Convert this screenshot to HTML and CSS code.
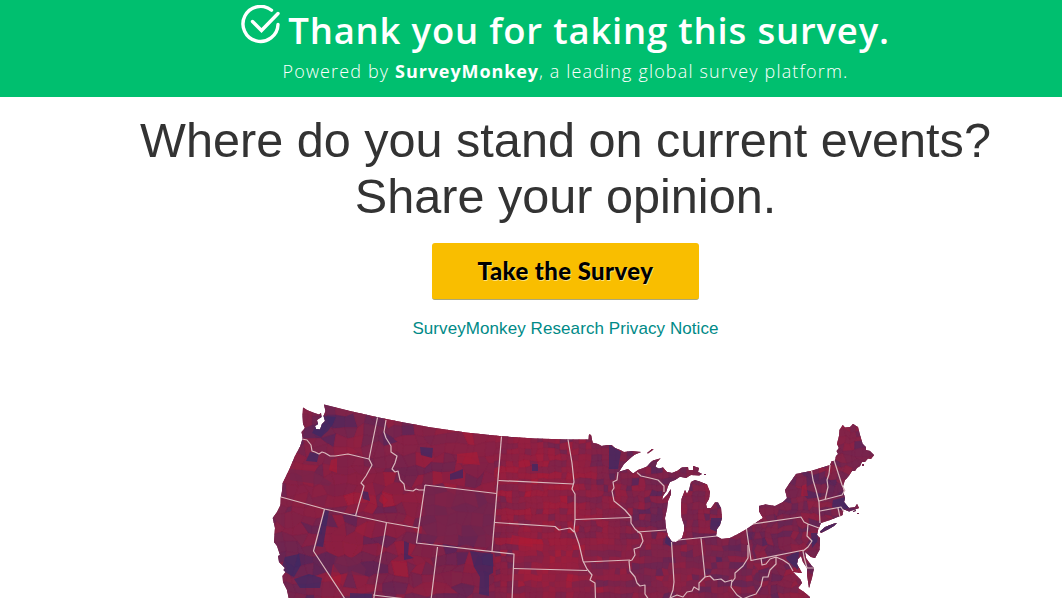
FILE: index.html
```html
<!DOCTYPE html>
<html lang="en">
<head>
  <meta charset="UTF-8" />
  <meta name="viewport" content="width=device-width, initial-scale=1.0"/>
  <title>Thank you for taking this survey</title>
  <link rel="stylesheet" href="styles.css">
</head>
<body>
  <header class="banner">
    <div class="banner-title">
      <svg class="check-icon" viewBox="0 0 40 40" width="40" height="40">
        <path d="M30.500 5.300A17.500 17.500 0 1 0 37 19.500" />
        <path d="M11.500 16.500L20.500 25.500L37 8.500" />
      </svg>
      <h2>Thank you for taking this survey.</h2>
    </div>
    <p class="powered">Powered by <strong>SurveyMonkey</strong>, a leading global survey platform.</p>
  </header>

  <main class="content">
    <h1>Where do you stand on current events?<br>Share your opinion.</h1>
    <a class="survey-btn" href="#"><span>Take the Survey</span></a>
    <a class="privacy-link" href="#">SurveyMonkey Research Privacy Notice</a>

    <svg class="map" viewBox="265 395 620 203" width="620" height="203">
      <defs>
        <clipPath id="land">
          <path d="M303 407.5L307 410L313 412.500L319 414.500L321 413L321.500 417L317 420L318 424L315 426L316 429L320 429.500L322 424L325 421L323.500 416L325.500 411L324 404.500L350 411L377.700 417.300L404 422.500L430 427.300L466 432.500L501.700 436.300L535 438.500L568 439.500L588.500 439.500L589 434.300L591 435L592.700 442.700L598 444L601.700 446L607 445L611.700 445L615 448L620 450L624 452L632 451L641 452L634 455L630 458.500L624 464L619 471.700L628 469L633 473.500L638 470L646.700 466.700L650 463L653 460.500L660.700 458.300L657 462L655.500 467L659 468.500L663 467.500L667 472L672 473L677 471L682 467.500L688 467L688.500 470L693 470L693 466L699 468L698.500 470L698 472L702 474L699 475.500L691 475L686 478L680 476.700L675 480L670 482L668 486L666.500 491L663 496L662 500L667 495L671 489L671 494L668 501L667 509L665 518L666 528L668 536L672 541.700L676 542L682 538L684 531L684 525L681.500 517L681 508L681.500 499L685 490L687 494L689 490L691 482L695 480L701 482L707 484.500L710 492L709 499L706 504L707 508L711 508L715 502.500L718 502.500L721 508L722 518L720 525L717 529L716 536L721.700 539L730 538L738 534L746.700 529L754 524L763 518L759 511L759 506L766 504.500L775 506L783 502L787 498L785 490L789 484L796 474L811.700 470.700L830 465L831.700 461L835 461L836 456L838 454L836.500 451L839 448L837 444L839 436L839.500 430L842.700 425L845 427.500L850 427L853 424L858 427L860 435L862.700 444L866 447L866 450L870 451L874 455L871 459L868 458.500L865 462L862 462L860 466L857 468L855 471L852 471L848 477L845 480L843 486L843.500 493L845 498L844 502L849 508L855 507L857 504L859 508L855 509.500L849 511.500L843 509L842.700 515L830 520L821 523L818 530L817 535L820 538L819.500 550L815 558L811 557L805 552L806 558L811 565L814 568L812 578L809 588L807 575L807 568L803 562L801 556L798 559L797 564L802 573L793 572L800 579L802 583L798 588L804 592L810 597L810 600L289 600L287 590L283 582L282.500 576L285.500 572L283.500 570L285 568L279 562L278 556L280 555L277 546L274 542L275 528L272.700 518L277 512L280.500 505L280.700 498L282 491L282.700 483L289 470L295 456L300 446.700L302.700 438L301.500 432L305 428L303 424L302.500 416Z" />
          <path d="M820 531.500L825 527L834 523.500L837 523L834 526L827 530L821 533Z" />
          <path d="M647 453L652 449L653.500 449.500L648 453.500Z" />
          <path d="M704 474h2v1h-2zM853 511l3-1v1l-3 1zM857 513h2v1h-2zM862 464h2v2h-2z" />
        </clipPath>
      </defs>
      <g clip-path="url(#land)">
        <rect class="base" x="265" y="395" width="620" height="203" />
        <g id="counties"></g>
        <g class="navy">
          <path d="M321 416L336 417L333 424L328 431L321 437L312 433Z" />
          <path d="M310 452L319 454L317 462L306 461Z" />
          <path d="M285 557L299 554L301 565L294 577L281 570Z" />
          <path d="M294 579L309 574L322 578L320 588L300 588Z" />
          <path d="M324.500 510L329 511L323 547L316 546Z" />
          <path d="M350 593L372 594L372 600L350 600Z" />
          <path d="M404 541L409 543L408 555L414 558L404 560Z" />
          <path d="M450 474L463 469L463 478L450 480Z" />
          <path d="M420 447L433 448L432 458L421 455Z" />
          <path d="M532 464L538 464L538 471L532 471Z" />
          <path d="M470 551L493 554L493 573L489 575L489 596L479 594L480 577L474 567Z" />
          <path d="M609 444L621 452L618 469L609 469Z" />
          <path d="M666 535L673 543L671 547L665 543Z" />
          <path d="M711 518L723 518L717 532L710 529Z" />
          <path d="M833 500L846 497L849 507L844 511L832 507Z" />
          <path d="M820 528L838 522L838 526L820 533Z" />
          <path d="M786 557L799 551L798 570L787 560Z" />
          <path d="M811 533L819 533L817 542L812 548Z" />
          <path d="M362 491L368 492L370 501L363 499Z" />
        </g>
        <g class="crimson">
          <path d="M331 460L337 458L337 473L329 470Z" />
          <path d="M333 564L341 575L340 588L330 580Z" />
          <path d="M457 454L477 452L480 465L457 463Z" />
          <path d="M381 494L388 500L384 505L379 501Z" />
          <path d="M512 535L532 539L533 547L510 544Z" />
          <path d="M802 486L806 484L808 496L801 496Z" />
        </g>
        <g class="plum">
          <path d="M290 469L313 471L332 483L329 486L290 480Z" />
          <path d="M335 557L355 557L366 569L364 576L333 572Z" />
          <path d="M425 485L496 493L493 548L421 541Z" />
        </g>
      </g>
      <!-- state lines -->
      <g class="borders">
        <path d="M302 439L307 440L311 445L312 451L315 452L319 454L322 452L325 453L330 456L335 456L348 454L369 459" />
        <path d="M377.500 417.500L369 459L372 465L366 476L361 483L364 486L355.500 516" />
        <path d="M386 420L384 432L386 438L391 446L391 452L397 456L395 463L392 469L395 472L398 471L400 480L404 484L405 490L413 491L416 489L419 490L425 490" />
        <path d="M281 497L324.500 509L386.500 522.500L418 528" />
        <path d="M324.500 509L313.500 551L345 599" />
        <path d="M386.500 522.500L373.500 600" />
        <path d="M501.500 436.500L492 551.500" />
        <path d="M425 485L496.500 493.500M425 485L416.500 543L514 554L512 600M437.500 547L431 600" />
        <path d="M373 595L431 602" />
        <path d="M498.500 480.500L573.500 484M495 522.500L555 526.500L559 530L570 528L574 532M513.500 568.500L587 570.500" />
        <path d="M568 439.500L572 463L574 482L572 489L575 494L575 520L574 530L579 544L583 561L587 569L592 575L590 580L595 583L595.500 600" />
        <path d="M575 519.500L631 517.500M583 562L630 560" />
        <path d="M618 472L617 480L613 482L614 488L612 491L614 501L619 505L625 510L631 517L631 523L635 529L641 534L643 541L640 547L634 549L635 555L632 560L629 561L630 571L635 577L637 583L640 586L645 585L645 594L649 600" />
        <path d="M637 532L666 530" />
        <path d="M637 472.500L641 476L650 478L658 480L664 486L664 492" />
        <path d="M671.500 542L674 582L673 590L670 598M678 540L717 536M701 538L705 577" />
        <path d="M670 598L677 595L683 597L687 592L692 591L694 587L699 590L699 583L705 577L710 576L714 580L721 579L725 582L732 580L731 587L737 595L743 599" />
        <path d="M746.500 529L751 560.500L804 550M753 524L801 517L804 522L808 524L819 528M808 524L807 536L812 541L808 547L803 551L804 557L807 568L814 568" />
        <path d="M748 545L748 558L743 566L735 573L735 578L732 582M743 599L750 596L756 594L761 586L763 577L768 577L770 570L776 564L776 557L770 559L766 564L762 565L761 558M776 557L783 560L789 564L793 571" />
        <path d="M811.500 470.500L813 480L816 490L819 502L820 523M830 465L829 474L827 480L828 487L825 500M834 460L842 485L845 491M819 501L842 495L845 490M820 511L841 507L844 512M838 508L840 517" />
      </g>
    </svg>
  </main>
  <script src="map.js"></script>
</body>
</html>
```

FILE: styles.css
```css
body {
  margin: 0;
  background: #fff;
  color: #333;
  font-family: "Liberation Sans", Arial, sans-serif;
  overflow: hidden;
}

.banner {
  box-sizing: border-box;
  height: 97px;
  padding-left: 69px;
  background: #00bf6f;
  color: #fff;
  font-family: "Open Sans", "Noto Sans", sans-serif;
  text-align: center;
}

.banner-title {
  display: flex;
  justify-content: center;
  gap: 7px;
  height: 57px;
  padding-top: 4px;
  box-sizing: border-box;
}

.banner-title h2 {
  margin: 0;
  font-size: 36.5px;
  font-weight: 600;
  line-height: 52px;
  letter-spacing: 0.8px;
  white-space: nowrap;
}

.check-icon {
  margin-top: 1px;
  fill: none;
  stroke: #fff;
  stroke-width: 3.4;
  stroke-linecap: round;
  flex: none;
}

.powered {
  margin: 0;
  font-size: 18px;
  font-weight: 300;
  line-height: 28px;
  letter-spacing: 1.15px;
}

.powered strong {
  font-weight: 700;
  letter-spacing: 0.9px;
}

.content {
  display: flex;
  flex-direction: column;
  align-items: center;
  padding-left: 69px;
}

h1 {
  margin: 15px 0 19px;
  font-size: 48.6px;
  font-weight: 400;
  line-height: 56px;
  text-align: center;
  white-space: nowrap;
}

.survey-btn {
  box-sizing: border-box;
  width: 267px;
  height: 57px;
  border-radius: 3px;
  border-bottom: 1px solid #a9a77c;
  background: #f9be00;
  color: #000;
  font-family: Lato, sans-serif;
  font-size: 24px;
  font-weight: 900;
  line-height: 56px;
  letter-spacing: 0.4px;
  text-align: center;
  text-decoration: none;
  text-shadow: 1px 1px 0 #fce17c;
}

.privacy-link {
  margin-top: 19px;
  color: #008a87;
  font-size: 17px;
  letter-spacing: 0.08px;
  line-height: 20px;
  text-decoration: none;
}

.map {
  display: block;
  margin-top: 56px;
  margin-left: 18px;
}

.base {
  fill: #80244a;
}

.navy {
  fill: #3b2a66;
  opacity: 0.7;
}

.crimson {
  fill: #ad1b35;
  opacity: 0.6;
}

.plum {
  fill: #74264e;
  opacity: 0.6;
}

.borders {
  fill: none;
  stroke: #d9b9bd;
  stroke-width: 1.2;
  stroke-linejoin: round;
}
```

FILE: map.js
```js
// areas that lean one way: x, y, radius, lean (-1 blue, 1 red)
const leans = [
  [320, 430, 28, -0.3],
  [295, 565, 30, -0.3],
  [345, 480, 35, 0.25],
  [400, 500, 35, 0.2],
  [345, 540, 35, 0.1],
  [460, 455, 45, 0.3],
  [535, 460, 40, 0.3],
  [540, 520, 50, 0.35],
  [550, 580, 45, 0.3],
  [405, 580, 30, 0.2],
  [460, 520, 35, -0.2],
  [605, 500, 30, 0.1],
  [615, 545, 35, 0.15],
  [650, 510, 35, -0.1],
  [690, 570, 25, 0.1],
  [780, 540, 30, -0.1],
  [840, 500, 30, -0.2],
  [735, 550, 25, -0.15]
];

let seed = 41;
function rand() {
  seed = (seed * 16807) % 2147483647;
  return seed / 2147483647;
}

function leanAt(x, y) {
  let sum = 0;
  leans.forEach(([lx, ly, r, v]) => {
    const d = Math.hypot(x - lx, y - ly) / r;
    sum += v * Math.exp(-d * d);
  });
  return sum;
}

function mix(v) {
  const mid = [126, 36, 74];
  const end = v > 0 ? [174, 27, 53] : [56, 41, 104];
  const t = Math.min(Math.abs(v), 1);
  return `rgb(${mid.map((c, i) => Math.round(c + (end[i] - c) * t)).join(",")})`;
}

// counties get smaller and squarer towards the east
function drawCounties(x0, x1, size, jitter) {
  const cols = Math.ceil((x1 - x0) / size);
  const rows = Math.ceil(203 / size);
  const pts = [];
  for (let r = 0; r <= rows; r++) {
    pts.push([]);
    for (let c = 0; c <= cols; c++) {
      pts[r].push([
        (x0 + c * size + (rand() - 0.5) * jitter).toFixed(1),
        (395 + r * size + (rand() - 0.5) * jitter).toFixed(1)
      ]);
    }
  }
  let out = "";
  let last = 0;
  for (let r = 0; r < rows; r++) {
    for (let c = 0; c < cols; c++) {
      if (rand() > 0.35) last = (rand() + rand() - 1) * 0.5;
      const v = last + leanAt(x0 + c * size, 395 + r * size);
      const quad = [pts[r][c], pts[r][c + 1], pts[r + 1][c + 1], pts[r + 1][c]];
      const color = mix(v);
      out += `<polygon points="${quad.join(" ")}" fill="${color}" stroke="${color}" stroke-width="0.6" />`;
    }
  }
  return out;
}

document.getElementById("counties").innerHTML =
  drawCounties(265, 500, 10, 8) +
  drawCounties(495, 760, 6, 2.5) +
  drawCounties(755, 885, 6, 5);
```
